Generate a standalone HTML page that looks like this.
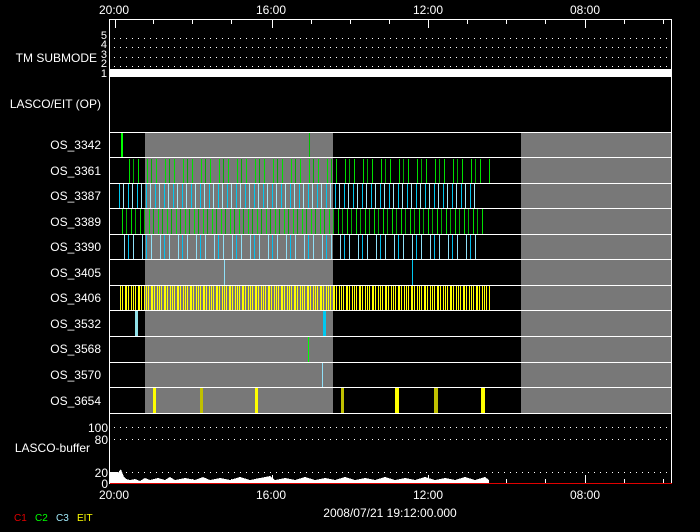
<!DOCTYPE html>
<html><head><meta charset="utf-8"><style>
html,body{margin:0;padding:0;background:#000;width:700px;height:532px;overflow:hidden}
svg{display:block}
text{font-family:"Liberation Sans",sans-serif;fill:#fff;font-size:12px}
</style></head><body>
<svg width="700" height="532" viewBox="0 0 700 532" xmlns="http://www.w3.org/2000/svg" shape-rendering="crispEdges">
<rect x="109.5" y="19.5" width="562" height="464" fill="none" stroke="#fff"/>
<g fill="#fff">
<rect x="115" y="20" width="1" height="8"/><rect x="153" y="20" width="1" height="4"/><rect x="192" y="20" width="1" height="4"/><rect x="231" y="20" width="1" height="4"/>
<rect x="272" y="20" width="1" height="8"/><rect x="311" y="20" width="1" height="4"/><rect x="350" y="20" width="1" height="4"/><rect x="389" y="20" width="1" height="4"/>
<rect x="428" y="20" width="1" height="8"/><rect x="467" y="20" width="1" height="4"/><rect x="506" y="20" width="1" height="4"/><rect x="545" y="20" width="1" height="4"/>
<rect x="585" y="20" width="1" height="8"/><rect x="624" y="20" width="1" height="4"/><rect x="663" y="20" width="1" height="4"/>
</g>
<g stroke="#fff" stroke-width="1" stroke-dasharray="1 5">
<line x1="114" y1="38.5" x2="671" y2="38.5"/>
<line x1="114" y1="47.5" x2="671" y2="47.5"/>
<line x1="114" y1="57.5" x2="671" y2="57.5"/>
<line x1="114" y1="66.5" x2="671" y2="66.5"/>
<line x1="114" y1="427.5" x2="671" y2="427.5"/>
<line x1="114" y1="439.5" x2="671" y2="439.5"/>
<line x1="114" y1="472.5" x2="671" y2="472.5"/>
</g>
<rect x="110" y="69" width="561" height="8" fill="#fff"/>
<rect x="145" y="132" width="188" height="281" fill="#787878"/>
<rect x="521" y="132" width="150" height="281" fill="#787878"/>
<rect x="121" y="132" width="2" height="26" fill="#00ff00"/>
<rect x="309" y="132" width="1" height="26" fill="#00c000"/>
<line x1="129" y1="171" x2="490" y2="171" stroke="#00e000" stroke-width="24" stroke-dasharray="1 8"/>
<line x1="133" y1="171" x2="490" y2="171" stroke="#00b000" stroke-width="24" stroke-dasharray="1 17"/>
<line x1="119" y1="196" x2="478" y2="196" stroke="#00c8f0" stroke-width="24" stroke-dasharray="1 8"/>
<line x1="123" y1="196" x2="478" y2="196" stroke="#a0e8f8" stroke-width="24" stroke-dasharray="1 8"/>
<line x1="122" y1="221.5" x2="486" y2="221.5" stroke="#00e000" stroke-width="25" stroke-dasharray="1 8"/>
<line x1="126" y1="221.5" x2="486" y2="221.5" stroke="#00b000" stroke-width="25" stroke-dasharray="1 8"/>
<line x1="124" y1="247" x2="478" y2="247" stroke="#90e0f8" stroke-width="25" stroke-dasharray="1 8"/>
<line x1="128" y1="247" x2="478" y2="247" stroke="#00c0f0" stroke-width="25" stroke-dasharray="1 17"/>
<rect x="224" y="260" width="1" height="25" fill="#90e0f8"/>
<rect x="412" y="260" width="1" height="25" fill="#00c8f0"/>
<line x1="120" y1="298" x2="490" y2="298" stroke="#ffff00" stroke-width="25" stroke-dasharray="1 1 1 2 2 1 1 2 1 1"/>
<rect x="135" y="311" width="3" height="25" fill="#90e0e8"/>
<rect x="323" y="311" width="3" height="25" fill="#00c8f0"/>
<rect x="308" y="336" width="1" height="26" fill="#00ff00"/>
<rect x="322" y="362" width="1" height="26" fill="#90e0f8"/>
<rect x="153" y="388" width="3" height="25" fill="#ffff00"/>
<rect x="200" y="388" width="3" height="25" fill="#c0c000"/>
<rect x="255" y="388" width="3" height="25" fill="#ffff00"/>
<rect x="341" y="388" width="3" height="25" fill="#c0c000"/>
<rect x="395" y="388" width="4" height="25" fill="#ffff00"/>
<rect x="434" y="388" width="4" height="25" fill="#c0c000"/>
<rect x="481" y="388" width="4" height="25" fill="#ffff00"/>
<g fill="#fff">
<rect x="110" y="132" width="561" height="1"/><rect x="110" y="157" width="561" height="1"/>
<rect x="110" y="183" width="561" height="1"/><rect x="110" y="208" width="561" height="1"/>
<rect x="110" y="234" width="561" height="1"/><rect x="110" y="259" width="561" height="1"/>
<rect x="110" y="285" width="561" height="1"/><rect x="110" y="310" width="561" height="1"/>
<rect x="110" y="336" width="561" height="1"/><rect x="110" y="362" width="561" height="1"/>
<rect x="110" y="387" width="561" height="1"/><rect x="110" y="413" width="561" height="1"/>
</g>
<path d="M110 483 L110 472 L118 472 L118 473 L120 470 L121 469 L122 472 L124 477 L126 479 L130 480 L135 479 L140 481 L145 478 L150 480 L158 478 L165 480 L170 477 L175 480 L185 478 L195 480 L203 477 L210 480 L220 478 L230 480 L240 477 L250 480 L260 478 L270 476 L275 480 L285 478 L295 480 L305 477 L315 480 L325 478 L335 480 L345 477 L355 480 L365 478 L375 480 L385 477 L395 480 L405 478 L415 480 L425 477 L435 480 L445 478 L455 480 L465 477 L475 480 L485 477 L489 480 L489 483 Z" fill="#fff"/>
<rect x="110" y="483" width="562" height="1" fill="#e00000"/>
<g fill="#fff">
<rect x="115" y="475" width="1" height="8"/><rect x="153" y="479" width="1" height="4"/><rect x="192" y="479" width="1" height="4"/><rect x="231" y="479" width="1" height="4"/>
<rect x="272" y="475" width="1" height="8"/><rect x="311" y="479" width="1" height="4"/><rect x="350" y="479" width="1" height="4"/><rect x="389" y="479" width="1" height="4"/>
<rect x="428" y="475" width="1" height="8"/><rect x="467" y="479" width="1" height="4"/><rect x="506" y="479" width="1" height="4"/><rect x="545" y="479" width="1" height="4"/>
<rect x="585" y="475" width="1" height="8"/><rect x="624" y="479" width="1" height="4"/><rect x="663" y="479" width="1" height="4"/>
</g>
<g text-anchor="middle">
<text x="114" y="14">20:00</text><text x="271" y="14">16:00</text><text x="428" y="14">12:00</text><text x="585" y="14">08:00</text>
<text x="114" y="499">20:00</text><text x="271" y="499">16:00</text><text x="428" y="499">12:00</text><text x="585" y="499">08:00</text>
<text x="390" y="517">2008/07/21 19:12:00.000</text>
</g>
<g text-anchor="end">
<text x="97" y="62">TM SUBMODE</text>
<text x="101" y="108">LASCO/EIT (OP)</text>
<text x="101" y="149">OS_3342</text><text x="101" y="175">OS_3361</text><text x="101" y="200">OS_3387</text>
<text x="101" y="226">OS_3389</text><text x="101" y="251">OS_3390</text><text x="101" y="277">OS_3405</text>
<text x="101" y="302">OS_3406</text><text x="101" y="328">OS_3532</text><text x="101" y="353">OS_3568</text>
<text x="101" y="379">OS_3570</text><text x="101" y="405">OS_3654</text>
<text x="90" y="452">LASCO-buffer</text>
<text x="108" y="432">100</text><text x="108" y="444">80</text><text x="108" y="477">20</text><text x="108" y="488">0</text>
<text x="107" y="39" style="font-size:11px">5</text><text x="107" y="48" style="font-size:11px">4</text>
<text x="107" y="58" style="font-size:11px">3</text><text x="107" y="67" style="font-size:11px">2</text>
<text x="107" y="77" style="font-size:11px">1</text>
</g>
<text x="14" y="521" style="fill:#e00000;font-size:10px">C1</text>
<text x="35" y="521" style="fill:#00ff00;font-size:10px">C2</text>
<text x="56" y="521" style="fill:#a0e8f8;font-size:10px">C3</text>
<text x="77" y="521" style="fill:#ffff00;font-size:10px">EIT</text>
</svg>
</body></html>
